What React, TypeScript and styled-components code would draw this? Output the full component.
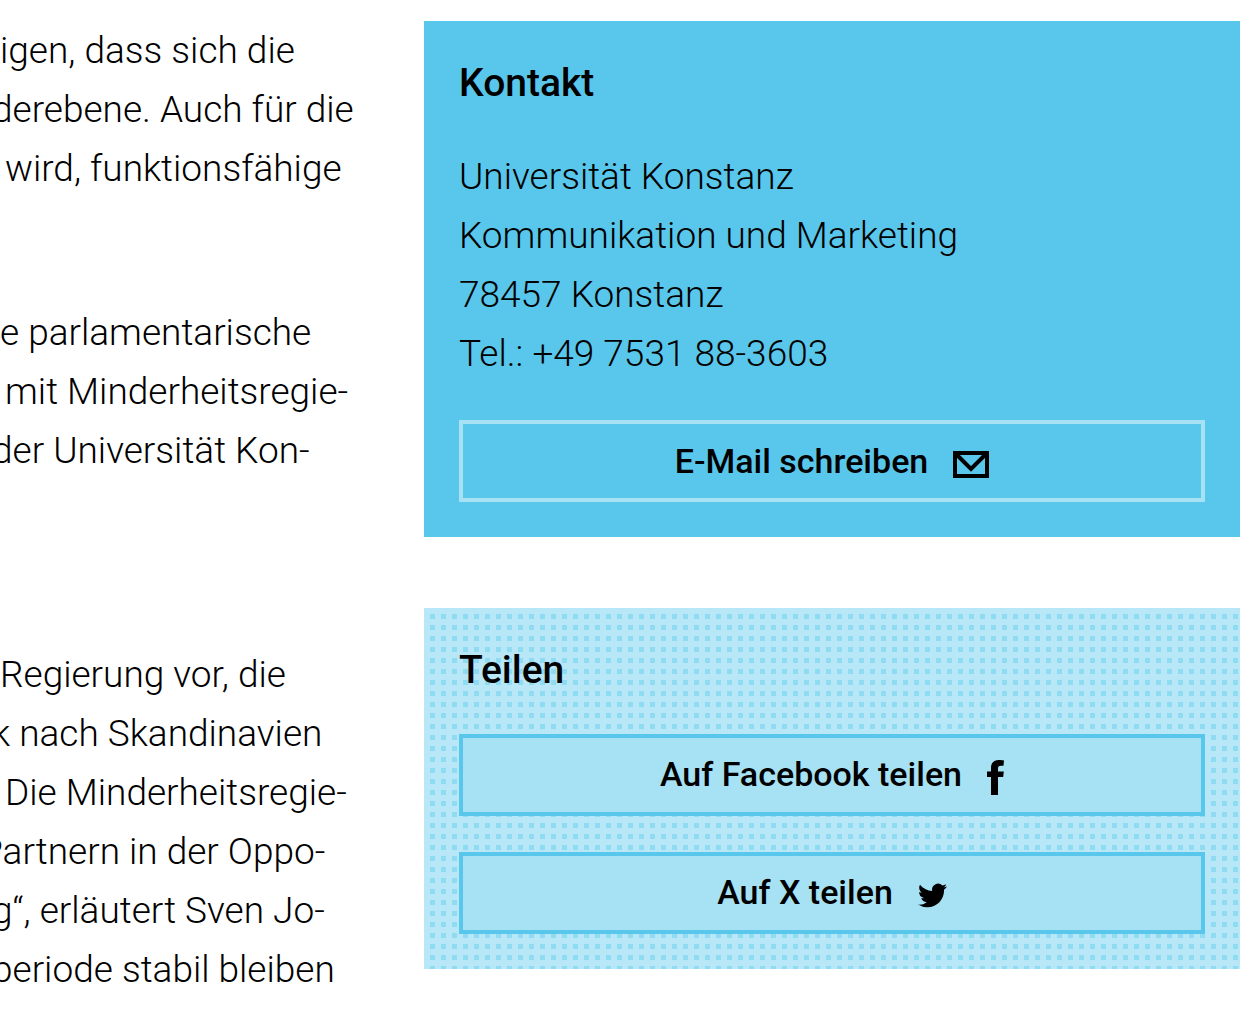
import React from 'react';
import styled, { createGlobalStyle } from 'styled-components';

const GlobalStyle = createGlobalStyle`
  *, *::before, *::after { box-sizing: border-box; }
  body {
    margin: 0;
    background: #fff;
    color: #000;
    font-family: Roboto, "Liberation Sans", sans-serif;
    overflow-x: hidden;
  }
`;

const Page = styled.div`
  display: grid;
  grid-template-columns: minmax(0, 424fr) minmax(0, 816fr);
  align-items: start;
  padding: 21px 20px 0 0;
`;

const Article = styled.article`
  overflow: hidden;
`;

const Paragraph = styled.p<{ $after?: number }>`
  margin: 0 0 ${(p) => p.$after ?? 0}px;
  font-size: 37px;
  font-weight: 300;
  line-height: 59px;
  white-space: pre;
`;

/* A line whose beginning runs out of the visible column */
const Line = styled.span<{ $cut?: number }>`
  display: block;
  margin-left: -${(p) => p.$cut ?? 0}px;
`;

const Sidebar = styled.aside`
  display: flex;
  flex-direction: column;
  gap: 71px;
`;

const Card = styled.section<{ $dotted?: boolean }>`
  padding: 33px 35px 35px;
  background-color: ${(p) => (p.$dotted ? '#b8e7f7' : '#59c7eb')};
  ${(p) =>
    p.$dotted &&
    `background-image: linear-gradient(#b8e7f7 6px, transparent 6px),
      linear-gradient(90deg, #b8e7f7 6px, #8fdbf2 6px);
    background-size: 11px 11px;`}
`;

const Heading = styled.h2`
  margin: 0 0 34px;
  font-size: 39px;
  font-weight: 500;
  line-height: 59px;
`;

const Address = styled.address`
  margin-bottom: 37px;
  font-size: 37px;
  font-style: normal;
  font-weight: 300;
  line-height: 59px;
`;

const Actions = styled.div`
  display: flex;
  flex-direction: column;
  gap: 36px;
`;

const ActionLink = styled.a<{ $filled?: boolean }>`
  display: flex;
  align-items: center;
  justify-content: center;
  gap: 25px;
  height: 82px;
  padding-bottom: ${(p) => (p.$filled ? 2 : 0)}px;
  border: 4px solid ${(p) => (p.$filled ? '#59c7eb' : '#a6e1f4')};
  background: ${(p) => (p.$filled ? '#a6e1f4' : 'transparent')};
  color: inherit;
  font-size: 34px;
  font-weight: 500;
  line-height: 48px;
  text-decoration: none;

  svg {
    display: block;
    flex: none;
    margin-top: 6px;
  }
`;

const MailIcon = () => (
  <svg width="36" height="27" viewBox="0 0 36 27" aria-hidden="true">
    <path d="M2 2H34V25H2Z" fill="none" stroke="#000" strokeWidth="4" />
    <path d="M3 3L18 18L33 3" fill="none" stroke="#000" strokeWidth="4" />
  </svg>
);

const FacebookIcon = () => (
  <svg width="17" height="35" viewBox="0 0 17 35" aria-hidden="true">
    <path d="M4 35V17H0V11.500H4V8C4 2.500 7 0 12 0C14 0 16 .2 17 .5L16.500 5.800H14C11.500 5.800 11 7 11 8.800V11.500H16.800L16.200 17H11V35Z" />
  </svg>
);

const TwitterIcon = () => (
  <svg width="29" height="25" viewBox="0 2 24 20" aria-hidden="true">
    <path d="M23.953 4.570a10 10 0 01-2.825.775 4.958 4.958 0 002.163-2.723c-.951.555-2.005.959-3.127 1.184a4.920 4.920 0 00-8.384 4.482C7.690 8.095 4.067 6.130 1.640 3.162a4.822 4.822 0 00-.666 2.475c0 1.710.870 3.213 2.188 4.096a4.904 4.904 0 01-2.228-.616v.060a4.923 4.923 0 003.946 4.827 4.996 4.996 0 01-2.212.085 4.936 4.936 0 004.604 3.417 9.867 9.867 0 01-6.102 2.105c-.390 0-.779-.023-1.170-.067a13.995 13.995 0 007.557 2.209c9.053 0 13.998-7.496 13.998-13.985 0-.210 0-.420-.015-.630A9.935 9.935 0 0024 4.590z" />
  </svg>
);

export default function App() {
  return (
    <>
      <GlobalStyle />
      <Page>
        <Article>
          <Paragraph $after={105}>
            <Line>igen, dass sich die</Line>
            <Line $cut={8}>derebene. Auch für die</Line>
            <Line $cut={4}> wird, funktionsfähige</Line>
          </Paragraph>
          <Paragraph $after={165}>
            <Line>e parlamentarische</Line>
            <Line $cut={4}> mit Minderheitsregie-</Line>
            <Line $cut={8}>der Universität Kon-</Line>
          </Paragraph>
          <Paragraph>
            <Line>Regierung vor, die</Line>
            <Line $cut={8}>k nach Skandinavien</Line>
            <Line $cut={4}> Die Minderheitsregie-</Line>
            <Line $cut={20}>Partnern in der Oppo-</Line>
            <Line $cut={8}>g“, erläutert Sven Jo-</Line>
            <Line $cut={8}>periode stabil bleiben</Line>
          </Paragraph>
        </Article>
        <Sidebar>
          <Card>
            <Heading>Kontakt</Heading>
            <Address>
              Universität Konstanz
              <br />
              Kommunikation und Marketing
              <br />
              78457 Konstanz
              <br />
              Tel.: +49 7531 88-3603
            </Address>
            <Actions>
              <ActionLink href="#email">
                E-Mail schreiben
                <MailIcon />
              </ActionLink>
            </Actions>
          </Card>
          <Card $dotted>
            <Heading>Teilen</Heading>
            <Actions>
              <ActionLink href="#facebook" $filled>
                Auf Facebook teilen
                <FacebookIcon />
              </ActionLink>
              <ActionLink href="#x" $filled>
                Auf X teilen
                <TwitterIcon />
              </ActionLink>
            </Actions>
          </Card>
        </Sidebar>
      </Page>
    </>
  );
}
